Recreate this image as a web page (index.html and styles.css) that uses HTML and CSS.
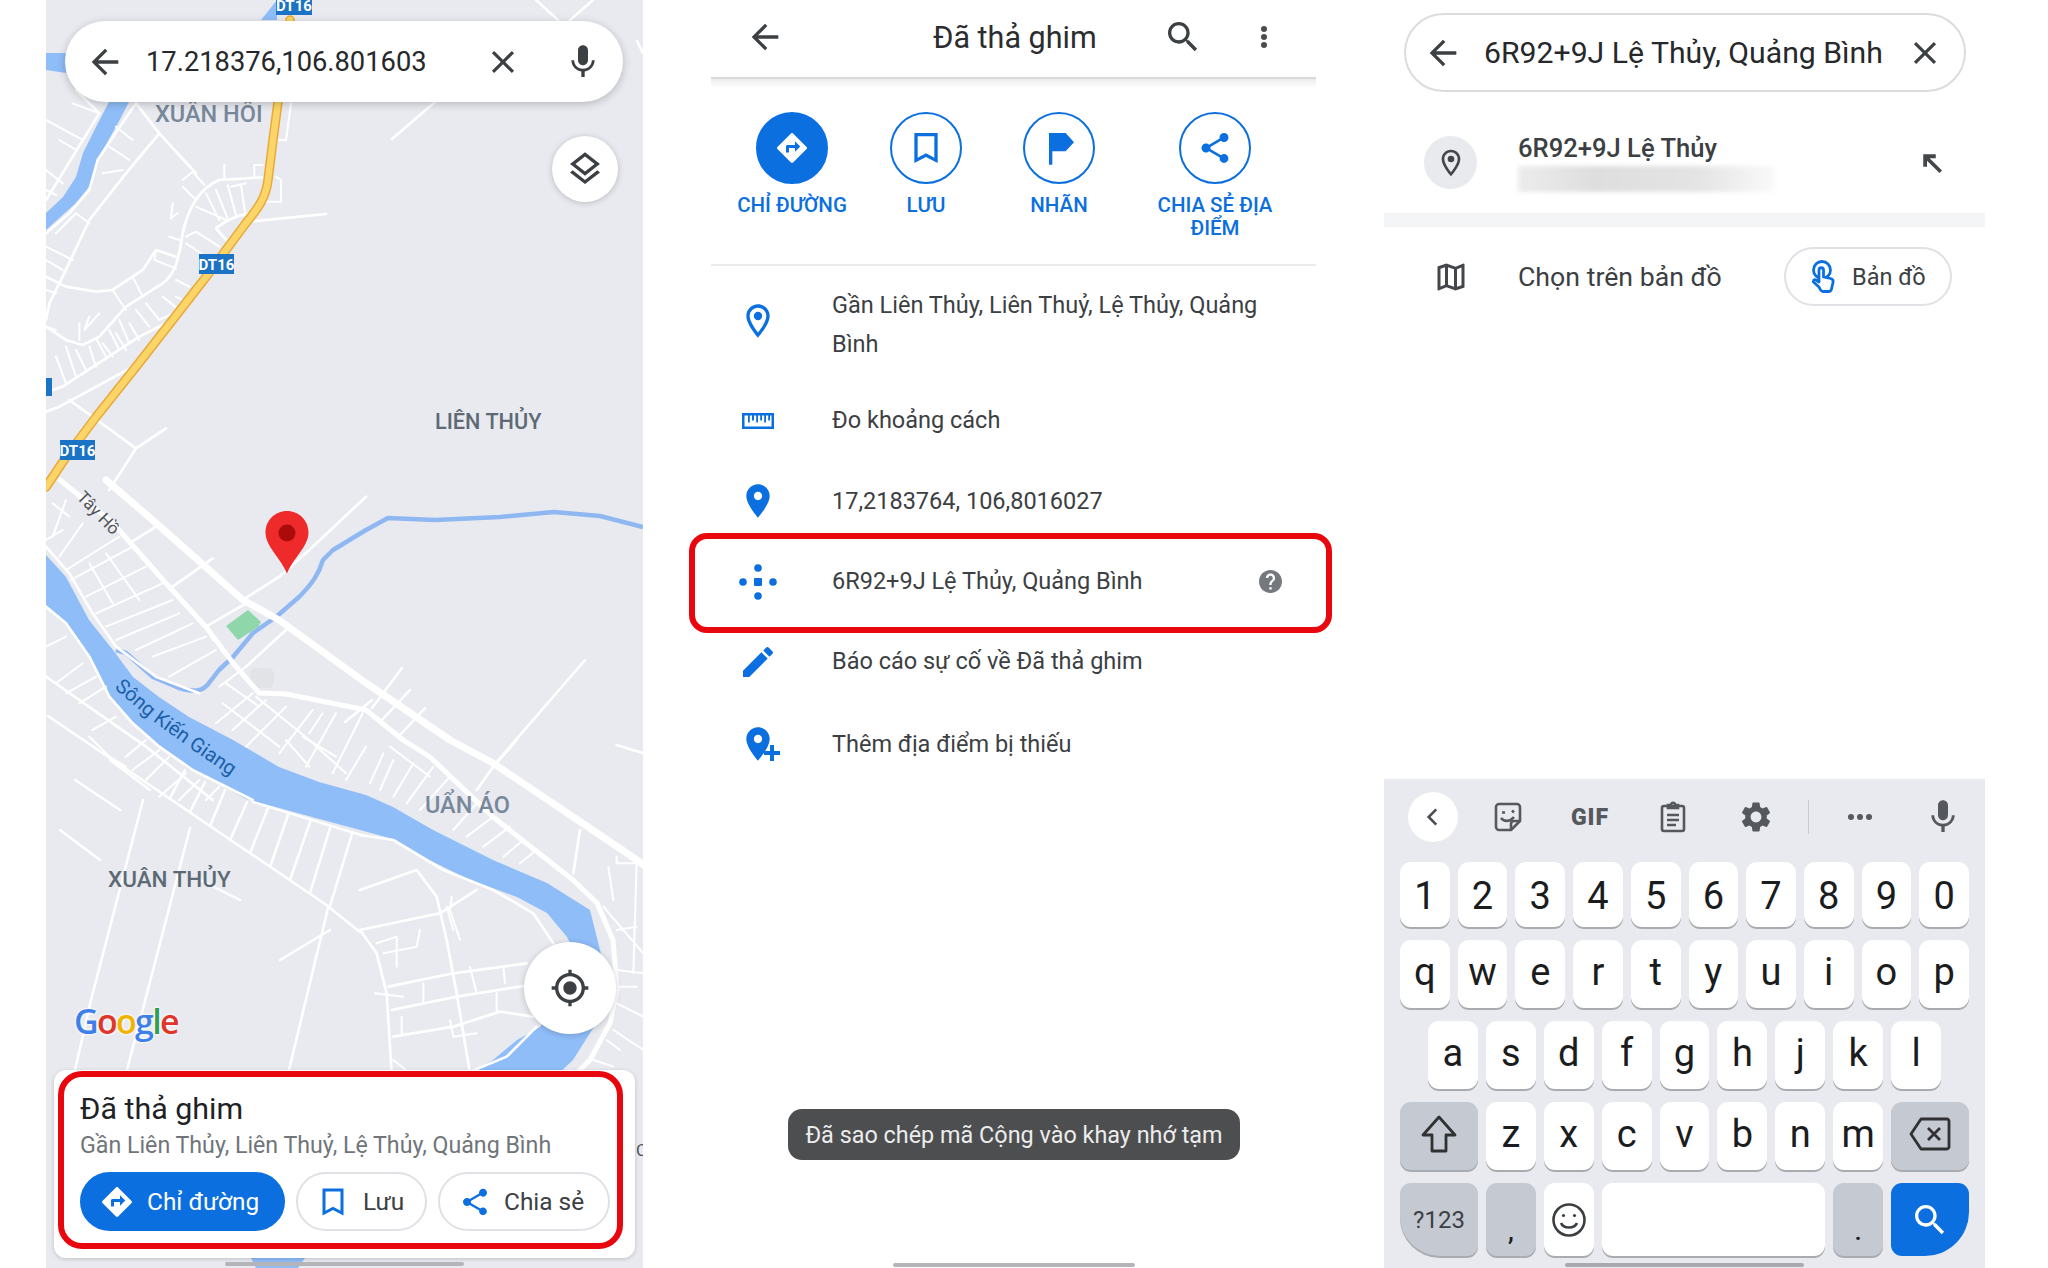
FILE: index.html
```html
<!DOCTYPE html>
<html lang="vi">
<head>
    <meta charset="UTF-8">
    <title>Đã thả ghim</title>
    <link rel="stylesheet" href="styles.css">
</head>
<body>
    <!-- icons -->
    <svg class="sprite" aria-hidden="true">
        <symbol id="i-back" viewBox="0 0 24 24"><path d="M20 11H7.83l5.59-5.59L12 4l-8 8 8 8 1.41-1.41L7.83 13H20v-2z"/></symbol>
        <symbol id="i-close" viewBox="0 0 24 24"><path d="M19 6.41L17.59 5 12 10.59 6.41 5 5 6.41 10.59 12 5 17.59 6.41 19 12 13.41 17.59 19 19 17.59 13.41 12z"/></symbol>
        <symbol id="i-mic" viewBox="0 0 24 24"><path d="M12 14c1.66 0 2.99-1.34 2.99-3L15 5c0-1.66-1.34-3-3-3S9 3.34 9 5v6c0 1.66 1.34 3 3 3zm5.3-3c0 3-2.54 5.1-5.3 5.1S6.7 14 6.7 11H5c0 3.41 2.72 6.23 6 6.72V21h2v-3.28c3.28-.48 6-3.3 6-6.72h-1.7z"/></symbol>
        <symbol id="i-layers" viewBox="0 0 24 24"><path d="M11.99 18.54l-7.37-5.73L3 14.07l9 7 9-7-1.63-1.27-7.38 5.74zM12 16l7.36-5.73L21 9l-9-7-9 7 1.63 1.27L12 16zm0-11.47L17.74 9 12 13.47 6.26 9 12 4.53z"/></symbol>
        <symbol id="i-locate" viewBox="0 0 24 24"><path d="M12 8c-2.21 0-4 1.79-4 4s1.79 4 4 4 4-1.79 4-4-1.79-4-4-4zm8.94 3c-.46-4.17-3.77-7.48-7.94-7.94V1h-2v2.06C6.83 3.52 3.52 6.83 3.06 11H1v2h2.06c.46 4.17 3.77 7.48 7.94 7.94V23h2v-2.06c4.17-.46 7.48-3.77 7.94-7.94H23v-2h-2.06zM12 19c-3.87 0-7-3.13-7-7s3.13-7 7-7 7 3.13 7 7-3.13 7-7 7z"/></symbol>
        <symbol id="i-directions" viewBox="0 0 24 24"><path d="M21.71 11.29l-9-9c-.39-.39-1.02-.39-1.41 0l-9 9c-.39.39-.39 1.02 0 1.41l9 9c.39.39 1.02.39 1.41 0l9-9c.39-.38.39-1.01 0-1.41zM14 14.5V12h-4v3H8v-4c0-.55.45-1 1-1h5V7.5l3.5 3.5-3.5 3.5z"/></symbol>
        <symbol id="i-bookmark" viewBox="0 0 24 24"><path d="M5 3h14v18l-7-3.6L5 21V3zm2 2v12.8l5-2.6 5 2.6V5H7z"/></symbol>
        <symbol id="i-label" viewBox="0 0 24 24"><path d="M6 3h10l5 5.5-5 5.5H8v8H6V3z"/></symbol>
        <symbol id="i-share" viewBox="0 0 24 24"><path d="M18 16.08c-.76 0-1.44.3-1.96.77L8.91 12.7c.05-.23.09-.46.09-.7s-.04-.47-.09-.7l7.05-4.11c.54.5 1.25.81 2.04.81 1.66 0 3-1.34 3-3s-1.34-3-3-3-3 1.34-3 3c0 .24.04.47.09.7L8.04 9.81C7.5 9.31 6.79 9 6 9c-1.66 0-3 1.34-3 3s1.34 3 3 3c.79 0 1.5-.31 2.04-.81l7.12 4.16c-.05.21-.08.43-.08.65 0 1.61 1.31 2.92 2.92 2.92 1.61 0 2.92-1.31 2.92-2.92s-1.31-2.92-2.92-2.92z"/></symbol>
        <symbol id="i-search" viewBox="0 0 24 24"><path d="M15.5 14h-.79l-.28-.27C15.41 12.59 16 11.11 16 9.5 16 5.91 13.09 3 9.5 3S3 5.91 3 9.5 5.91 16 9.5 16c1.61 0 3.09-.59 4.23-1.57l.27.28v.79l5 4.99L20.49 19l-4.99-5zm-6 0C7.01 14 5 11.99 5 9.5S7.01 5 9.5 5 14 7.01 14 9.5 11.99 14 9.5 14z"/></symbol>
        <symbol id="i-more" viewBox="0 0 24 24"><circle cx="12" cy="4" r="3"/><circle cx="12" cy="12" r="3"/><circle cx="12" cy="20" r="3"/></symbol>
        <symbol id="i-pin-outline" viewBox="0 0 24 24"><path d="M12 2C8.13 2 5 5.13 5 9c0 5.25 7 13 7 13s7-7.75 7-13c0-3.87-3.13-7-7-7zM7 9c0-2.76 2.24-5 5-5s5 2.24 5 5c0 2.88-2.88 7.19-5 9.88C9.92 16.21 7 11.85 7 9z"/><circle cx="12" cy="9" r="2.5"/></symbol>
        <symbol id="i-pin" viewBox="0 0 24 24"><path d="M12 2C8.13 2 5 5.13 5 9c0 5.25 7 13 7 13s7-7.75 7-13c0-3.87-3.13-7-7-7zm0 9.5c-1.38 0-2.5-1.12-2.5-2.5s1.12-2.5 2.5-2.5 2.5 1.12 2.5 2.5-1.12 2.5-2.5 2.5z"/></symbol>
        <symbol id="i-ruler" viewBox="0 0 32 16"><path d="M0 0h32v16H0V0zm2.500 2.500v11h27v-11H28v5h-1.800v-5h-2.200v7h-1.800v-7h-2.200v5h-1.800v-5h-2.200v7h-1.800v-7h-2.200v5H10v-5H7.800v7H6v-7H2.500z"/></symbol>
        <symbol id="i-code" viewBox="0 0 38 36"><circle cx="19" cy="4" r="3.800"/><circle cx="19" cy="32" r="3.800"/><circle cx="4" cy="18" r="3.800"/><circle cx="34" cy="18" r="3.800"/><rect x="15" y="14" width="8" height="8" rx="1"/></symbol>
        <symbol id="i-edit" viewBox="3 3 18 18"><path d="M3 17.250V21h3.750L17.810 9.940l-3.750-3.750L3 17.250zM20.710 7.040c.39-.39.39-1.020 0-1.410l-2.340-2.340c-.39-.39-1.020-.39-1.410 0l-1.830 1.830 3.750 3.750 1.830-1.830z"/></symbol>
        <symbol id="i-help" viewBox="2 2 20 20"><path d="M12 2C6.480 2 2 6.480 2 12s4.480 10 10 10 10-4.480 10-10S17.520 2 12 2zm1 17h-2v-2h2v2zm2.070-7.750l-.9.920C13.450 12.900 13 13.500 13 15h-2v-.5c0-1.100.45-2.100 1.170-2.830l1.240-1.260c.37-.36.59-.86.59-1.410 0-1.100-.9-2-2-2s-2 .9-2 2H8c0-2.210 1.790-4 4-4s4 1.790 4 4c0 .88-.36 1.680-.93 2.250z"/></symbol>
        <symbol id="i-northwest" viewBox="0 0 24 24"><path d="M5 15h3V10.100L18 20l2-2-9.900-9.900H15V5H5v10z"/></symbol>
        <symbol id="i-map" viewBox="0 0 24 24"><path d="M20.500 3l-.16.03L15 5.100 9 3 3.360 4.900c-.21.07-.36.25-.36.48V20.500c0 .28.22.5.5.5l.16-.03L9 18.900l6 2.100 5.640-1.900c.21-.07.36-.25.36-.48V3.500c0-.28-.22-.5-.5-.5zM10 5.470l4 1.400v11.660l-4-1.400V5.470zm-5 .99l3-1.010v11.700l-3 1.160V6.460zm14 11.080l-3 1.010V6.860l3-1.160v11.840z"/></symbol>
        <symbol id="i-gear" viewBox="0 0 24 24"><path d="M19.140 12.940c.04-.3.06-.61.06-.94 0-.32-.02-.64-.07-.94l2.030-1.580c.18-.14.23-.41.12-.61l-1.920-3.320c-.12-.22-.37-.29-.59-.22l-2.390.96c-.5-.38-1.030-.7-1.620-.94l-.36-2.540c-.04-.24-.24-.41-.48-.41h-3.840c-.24 0-.43.17-.47.41l-.36 2.540c-.59.24-1.130.57-1.620.94l-2.390-.96c-.22-.08-.47 0-.59.22L2.740 8.870c-.12.21-.08.47.12.61l2.030 1.580c-.05.3-.09.63-.09.94s.02.64.07.94l-2.030 1.580c-.18.14-.23.41-.12.61l1.920 3.320c.12.22.37.29.59.22l2.390-.96c.5.38 1.030.7 1.620.94l.36 2.540c.05.24.24.41.48.41h3.840c.24 0 .44-.17.47-.41l.36-2.540c.59-.24 1.130-.56 1.620-.94l2.390.96c.22.08.47 0 .59-.22l1.920-3.320c.12-.22.07-.47-.12-.61l-2.010-1.580zM12 15.600c-1.980 0-3.600-1.620-3.600-3.600s1.620-3.600 3.600-3.600 3.600 1.620 3.600 3.600-1.620 3.600-3.600 3.600z"/></symbol>
    </svg>

    <div class="page">
        <!-- panel 1: ban do -->
        <section class="map">
            <svg class="map-canvas" viewBox="46 0 597 1268" width="597" height="1268">
                <rect class="land" x="46" y="0" width="597" height="1268"/>

                <!-- song -->
                <path class="water" d="M46 555L66 577 89 620 113 650 133 677 159 697 189 717 233 740 279 767 319 782 366 795 393 807 433 830 493 860 547 883 590 910 600 950 612 1000 590 1033 573 1060 557 1075H467L493 1060 517 1040 540 1027 565 990 570 943 567 937 547 913 517 897 470 880 423 857 393 839 360 830 246 799 219 784 189 769 159 745 133 722 109 695 89 655 66 622 46 605z"/>
                <path class="water" d="M109 102H129L118 123 99 157 89 187 76 203 46 230V213L63 197 76 177 83 153 96 127z"/>
                <path class="water" d="M46 53H66V73L46 70zM261 20L277 0V20z"/>
                <path class="water" d="M251 1258H305L298 1268H256z"/>
                <path class="creek" d="M643 527L600 516 554 512 500 517 435 520 388 518 366 530 333 550 323 560C319 573 313 583 299 597L276 617 253 633 233 657 219 670 209 683C203 692 193 692 179 688L153 677 126 653 116 650"/>
                <path class="park" d="M226 626L248 610 261 622 258 627 238 640z"/>
                <rect class="smudge" x="250" y="668" width="24" height="20" rx="6"/>

                <!-- duong: phia tren, toa do theo anh 3x -->
                <g class="streets" transform="translate(46 90) scale(.3333)">
                    <path class="z-lane" d="M270 40L340 130 450 250M340 130L240 250 130 390 50 560 10 640 0 690"/>
                    <path class="z-lane" d="M650 262L520 270C470 290 430 340 410 430 400 500 390 550 350 580L240 650 160 740 110 765 60 750 0 710"/>
                    <path class="z-lane" d="M0 560L60 590 150 605 200 600 290 540 330 480 390 500"/>
                    <path class="z-lane" d="M610 395L840 372M510 415C540 390 580 375 610 370M510 415L550 460"/>
                    <path class="z-thin" d="M450 350L540 390M480 310L520 390M510 300L545 385M545 285L570 375M585 285L600 385M555 290L600 280"/>
                    <path class="z-thin" d="M420 440L450 425 520 470M420 460L480 500M380 340L375 385 395 370M370 440L400 450"/>
                    <path class="z-thin" d="M410 270L440 245 475 285M410 290L445 325M650 225H625V265M535 225V265M690 260L705 270V335H660M735 40L720 150H690"/>
                    <path class="z-thin" d="M200 600L240 660M260 560L290 620M330 480L325 510 390 535M300 640L340 690 380 670M270 660L310 710M220 690L250 760M190 720L220 780M150 745L180 800"/>
                    <path class="z-thin" d="M390 570L430 590M390 620L430 640M350 620L400 660"/>
                    <path class="z-lane" d="M380 690L280 740 50 890 20 900M280 820L40 950 0 965M70 930L270 1075 360 1015M270 1075L190 1200"/>
                    <path class="z-thin" d="M30 800L60 880M60 770L90 860M90 780L120 840M130 770L150 830M170 760L200 800M210 730L240 780M250 700L280 750M0 710L30 720M100 700V750M130 680L115 720 160 670"/>
                    <path class="z-lane" d="M160 70L80 200 0 330M270 40L215 120 155 210 130 300 70 370 0 430M90 0L160 70"/>
                    <path class="z-thin" d="M0 90L110 150M80 40L160 70M0 240L50 280M0 300L30 315M40 150L90 180M190 170L250 210M210 110L260 150M170 250L230 240M90 370L130 400M30 430L90 370M0 470L80 510M0 510L50 540M0 600L30 610"/>
                </g>

                <!-- duong: quanh song -->
                <g class="streets" transform="translate(46 480) scale(.3333)">
                    <path class="z-lane" d="M590 360L700 290 790 210 960 50M250 190L330 140M380 320L500 235M480 440L600 370M600 560L720 450"/>
                    <path class="z-lane" d="M0 200L70 280 140 400 210 500 330 590 460 640"/>
                    <path class="z-thin" d="M60 270L220 170M75 300L260 200M120 350L300 260M150 400L350 310M180 440L380 360M210 480L400 400M270 510L440 430M320 530L480 470M370 590L510 510M130 250L200 370M180 220L280 360"/>
                    <path class="z-thin" d="M0 180L50 150M20 70L70 110M60 60L20 170M110 130L40 230"/>
                    <path class="z-lane" d="M0 380L60 430 130 530 190 650 260 730 340 800 440 870 620 960"/>
                    <path class="z-lane" d="M0 590L100 660 200 730 300 800 400 880 500 960"/>
                    <path class="z-thin" d="M0 500L60 470M30 610L110 550M60 640L150 590M100 670L180 620M140 750L210 710M130 770L190 830 240 860M240 830L300 780M260 870L340 810M300 900L370 830M340 950L420 880M400 960L460 900M480 960L520 920"/>
                    <path class="z-thin" d="M520 620L600 560M510 730L620 640M560 750L660 660M600 800L720 680M700 820L800 690M780 860L870 700M860 880L950 700M900 900L960 800M630 650L790 780 900 880M530 670L700 800M720 780L790 860M770 770L870 830M540 610L640 680M790 760L830 700"/>
                </g>

                <!-- duong: goc duoi ben phai -->
                <g class="streets" transform="translate(360 740) scale(.3333)">
                    <path class="z-lane" d="M400 80L350 150M470 0L400 80M660 270L640 400M770 15L850 40"/>
                    <path class="z-thin" d="M830 370L820 700M770 350V370H860M745 380L760 480M730 500L850 640M770 570L830 560M770 690L850 700M770 740L830 740M770 790L850 830M760 870L850 930M740 900L780 930M700 960L760 980"/>
                    <path class="z-thin" d="M30 130L70 40M60 150L100 60M100 170L160 70M140 190L220 80M180 210L270 110M280 270L350 190M320 290L400 230M370 320L450 260M430 350L490 300M480 370L530 330M90 20L210 110"/>
                    <path class="z-lane" d="M0 285L100 300 250 390 400 450 520 520 580 610"/>
                    <path class="z-lane" d="M0 450L170 390 230 470 260 600 290 760 330 1000M0 570L240 520 350 450M0 570L50 640 80 760 95 1000"/>
                    <path class="z-thin" d="M50 610L110 590V680M70 640L170 620 180 570M45 760L130 770M190 730V790M125 830V880M270 840L280 890 350 880M330 680L350 760M430 680L435 730M410 760V815M100 960L150 1000M260 500L280 570M275 470L270 510 300 600"/>
                    <path class="z-lane" d="M85 740L280 700 500 670M95 810L290 770 510 735M100 890L280 860 420 815 520 830M320 1000L440 950 530 860"/>
                </g>

                <!-- duong nho con lai -->
                <path class="lane" d="M536 0L558 20M593 0L570 20M637 41L643 53M435 102L392 139"/>
                <path class="lane" d="M143 800L91 1000 75 1070M190 828L127 1070M328 908L289 1070M585 660L495 764M402 668L372 708M253 802L364 836"/>
                <path class="lane" d="M206 627L213 640M48 716L325 904 360 932"/>
                <path class="lane" d="M170 798L185 770M190 812L205 782M210 826L225 790M230 840L247 802M250 853L268 808M270 867L288 815M290 880L310 822M310 893L330 828M330 906L352 834"/>
                <path class="lane" d="M150 790L110 760M120 810L75 780M100 860L60 830M280 960L330 930M240 900L200 880M380 722L410 690M400 735L425 708M345 722L372 700"/>
                <path class="road" d="M106 480L156 523 243 600 279 620 366 683 450 740 493 763 637 860 650 870"/>
                <path class="road-thin" d="M60 480L113 523 163 580 206 627 233 663 259 693 286 694 366 710 403 740 430 757 493 817 573 880 597 903 613 940 617 990 610 1023 590 1060 577 1073"/>
                <path class="road-yellow-edge" d="M290 20L278 102 273 140 268 180C266 197 259 207 246 223L206 277 139 363 96 417 66 457 46 487"/>
                <path class="road-yellow" d="M290 20L278 102 273 140 268 180C266 197 259 207 246 223L206 277 139 363 96 417 66 457 46 487"/>

                <!-- nhan -->
                <rect class="badge" x="199" y="254" width="35" height="20"/>
                <rect class="badge" x="60" y="440" width="35" height="20"/>
                <rect class="badge" x="276" y="-5" width="36" height="20"/>
                <rect class="badge" x="46" y="378" width="6" height="18"/>
                <text class="badge-text" x="216.500" y="270">DT16</text>
                <text class="badge-text" x="77.500" y="456">DT16</text>
                <text class="badge-text" x="294" y="11">DT16</text>

                <text class="place place-light" x="155" y="122">XUÂN HỒI</text>
                <text class="place place-small" x="435" y="429">LIÊN THỦY</text>
                <text class="place place-light" x="425" y="813">UẨN ÁO</text>
                <text class="place" x="108" y="887">XUÂN THỦY</text>
                <text class="street" transform="translate(76 498) rotate(46)">Tây Hồ</text>
                <path id="river-label" fill="none" d="M114 688L150 719 190 748 236 780"/>
                <text class="river-name"><textPath href="#river-label">Sông Kiến Giang</textPath></text>
                <text class="street" x="636" y="1156">C</text>

                <!-- ghim do -->
                <path class="pin-red" d="M287 511c-12 0-21.500 9.500-21.500 21.500 0 14 15 25 21.500 41 6.500-16 21.500-27 21.500-41 0-12-9.500-21.500-21.500-21.500z"/>
                <circle class="pin-dot" cx="287" cy="533" r="8.500"/>
            </svg>

            <div class="map-search">
                <svg class="icon icon-40"><use href="#i-back"/></svg>
                <span class="map-search-text">17.218376,106.801603</span>
                <svg class="icon icon-38"><use href="#i-close"/></svg>
                <svg class="icon icon-40 map-search-mic"><use href="#i-mic"/></svg>
            </div>

            <button class="fab fab-layers"><svg class="icon icon-40"><use href="#i-layers"/></svg></button>
            <button class="fab fab-locate"><svg class="icon icon-40"><use href="#i-locate"/></svg></button>

            <div class="google-logo"><span class="g-blue">G</span><span class="g-red">o</span><span class="g-yellow">o</span><span class="g-blue">g</span><span class="g-green">l</span><span class="g-red">e</span></div>

            <div class="place-card">
                <h2 class="place-title">Đã thả ghim</h2>
                <p class="place-sub">Gần Liên Thủy, Liên Thuỷ, Lệ Thủy, Quảng Bình</p>
                <div class="card-buttons">
                    <button class="pill pill-primary"><svg class="icon icon-36"><use href="#i-directions"/></svg>Chỉ đường</button>
                    <button class="pill pill-save"><svg class="icon icon-36 blue"><use href="#i-bookmark"/></svg>Lưu</button>
                    <button class="pill pill-share"><svg class="icon icon-32 blue"><use href="#i-share"/></svg>Chia sẻ</button>
                </div>
                <div class="red-box"></div>
            </div>
            <div class="home-bar home-bar-map"></div>
        </section>

        <!-- panel 2: chi tiet -->
        <section class="detail">
            <header class="detail-head">
                <svg class="icon icon-40 head-back"><use href="#i-back"/></svg>
                <h1 class="detail-title">Đã thả ghim</h1>
                <svg class="icon icon-40 head-search"><use href="#i-search"/></svg>
                <svg class="icon icon-dots"><use href="#i-more"/></svg>
            </header>

            <div class="actions">
                <div class="action">
                    <span class="action-circle is-filled"><svg class="icon icon-36"><use href="#i-directions"/></svg></span>
                    <span class="action-label">CHỈ ĐƯỜNG</span>
                </div>
                <div class="action">
                    <span class="action-circle"><svg class="icon icon-40 blue"><use href="#i-bookmark"/></svg></span>
                    <span class="action-label">LƯU</span>
                </div>
                <div class="action">
                    <span class="action-circle"><svg class="icon icon-40 blue"><use href="#i-label"/></svg></span>
                    <span class="action-label">NHÃN</span>
                </div>
                <div class="action">
                    <span class="action-circle"><svg class="icon icon-36 blue"><use href="#i-share"/></svg></span>
                    <span class="action-label">CHIA SẺ ĐỊA ĐIỂM</span>
                </div>
            </div>

            <ul class="info-list">
                <li class="info-row is-tall">
                    <svg class="icon icon-40 blue"><use href="#i-pin-outline"/></svg>
                    <span class="info-text">Gần Liên Thủy, Liên Thuỷ, Lệ Thủy, Quảng Bình</span>
                </li>
                <li class="info-row">
                    <svg class="icon blue icon-ruler"><use href="#i-ruler"/></svg>
                    <span class="info-text">Đo khoảng cách</span>
                </li>
                <li class="info-row">
                    <svg class="icon icon-40 blue"><use href="#i-pin"/></svg>
                    <span class="info-text">17,2183764, 106,8016027</span>
                </li>
                <li class="info-row is-marked">
                    <svg class="icon blue icon-code"><use href="#i-code"/></svg>
                    <span class="info-text">6R92+9J Lệ Thủy, Quảng Bình</span>
                    <svg class="icon icon-help"><use href="#i-help"/></svg>
                </li>
                <li class="info-row">
                    <svg class="icon blue icon-edit"><use href="#i-edit"/></svg>
                    <span class="info-text">Báo cáo sự cố về Đã thả ghim</span>
                </li>
                <li class="info-row is-last">
                    <span class="pin-plus">
                        <svg class="icon icon-40 blue"><use href="#i-pin"/></svg>
                        <span class="plus-v"></span><span class="plus-h"></span>
                    </span>
                    <span class="info-text">Thêm địa điểm bị thiếu</span>
                </li>
            </ul>

            <div class="toast">Đã sao chép mã Cộng vào khay nhớ tạm</div>
            <div class="home-bar home-bar-detail"></div>
        </section>

        <!-- panel 3: tim kiem + ban phim -->
        <section class="finder">
            <div class="finder-search">
                <svg class="icon icon-40"><use href="#i-back"/></svg>
                <span class="finder-text">6R92+9J Lệ Thủy, Quảng Bình</span>
                <svg class="icon icon-38"><use href="#i-close"/></svg>
            </div>

            <div class="suggestion">
                <span class="suggestion-circle"><svg class="icon icon-32 dark"><use href="#i-pin-outline"/></svg></span>
                <div class="suggestion-body">
                    <div class="suggestion-title">6R92+9J Lệ Thủy</div>
                    <div class="suggestion-blur"></div>
                </div>
                <svg class="icon icon-30 dark"><use href="#i-northwest"/></svg>
            </div>
            <div class="band"></div>

            <div class="pick-row">
                <svg class="icon icon-36 dark"><use href="#i-map"/></svg>
                <span class="pick-text">Chọn trên bản đồ</span>
                <button class="pick-button">
                    <svg class="icon-hand" viewBox="0 0 26 33" fill="none">
                        <circle cx="11" cy="10" r="8.500" stroke="#0b6fe0" stroke-width="2.800"/>
                        <path d="M8 27L3 22.500c-1.500-1.500 0-3.500 2-2.500l3 2V10c0-3 4.500-3 4.500 0v7l7 1.500c2 .5 3 2 2.500 4l-1.500 6.500c-.3 1.500-1.500 2.500-3 2.500H12c-1.500 0-2.500-1-4-4.500z" fill="#fff" stroke="#0b6fe0" stroke-width="2.800" stroke-linejoin="round"/>
                    </svg>
                    Bản đồ
                </button>
            </div>

            <div class="keyboard">
                <div class="kb-tools">
                    <span class="kb-back"><svg viewBox="0 0 24 24" width="26" height="26" fill="none" stroke="#4a4d52" stroke-width="2.400"><path d="M15 5l-7 7 7 7"/></svg></span>
                    <span class="kb-tool">
                        <svg viewBox="0 0 28 30" width="28" height="30" fill="none" stroke="#55585c" stroke-width="2.600" stroke-linejoin="round"><path d="M5 2h18c1.500 0 3 1.500 3 3v14l-9 9H5c-1.500 0-3-1.500-3-3V5c0-1.500 1.500-3 3-3z"/><path d="M26 19h-6c-2 0-3 1-3 3v6"/><path d="M7 16c3 4 9 4 13-1"/><path d="M8 10.500h3M18 8.500l2 2"/></svg>
                    </span>
                    <span class="kb-tool kb-gif">GIF</span>
                    <span class="kb-tool">
                        <svg viewBox="0 0 26 32" width="26" height="32" fill="none" stroke="#55585c" stroke-width="2.600"><rect x="2" y="5" width="22" height="25" rx="2"/><path d="M8 7V4h3c0-3 4-3 4 0h3v3H8zM7 14h12M7 19h12M7 24h9"/></svg>
                    </span>
                    <span class="kb-tool"><svg class="icon icon-36 gear"><use href="#i-gear"/></svg></span>
                    <span class="kb-sep"></span>
                    <span class="kb-tool kb-dots"><i></i><i></i><i></i></span>
                    <span class="kb-tool"><svg class="icon icon-40 gear"><use href="#i-mic"/></svg></span>
                </div>

                <div class="kb-rows">
                    <div class="kb-row kb-ten kb-num">
                        <span class="key">1</span><span class="key">2</span><span class="key">3</span><span class="key">4</span><span class="key">5</span><span class="key">6</span><span class="key">7</span><span class="key">8</span><span class="key">9</span><span class="key">0</span>
                    </div>
                    <div class="kb-row kb-ten kb-tall">
                        <span class="key">q</span><span class="key">w</span><span class="key">e</span><span class="key">r</span><span class="key">t</span><span class="key">y</span><span class="key">u</span><span class="key">i</span><span class="key">o</span><span class="key">p</span>
                    </div>
                    <div class="kb-row kb-nine kb-tall">
                        <span class="key">a</span><span class="key">s</span><span class="key">d</span><span class="key">f</span><span class="key">g</span><span class="key">h</span><span class="key">j</span><span class="key">k</span><span class="key">l</span>
                    </div>
                    <div class="kb-row kb-shift kb-tall">
                        <span class="key key-gray">
                            <svg viewBox="0 0 38 40" width="38" height="40" fill="none" stroke="#2f3133" stroke-width="2.800" stroke-linejoin="round"><path d="M19 3L3 21h9v16h14V21h9z"/></svg>
                        </span>
                        <span class="key">z</span><span class="key">x</span><span class="key">c</span><span class="key">v</span><span class="key">b</span><span class="key">n</span><span class="key">m</span>
                        <span class="key key-gray">
                            <svg viewBox="0 0 42 36" width="42" height="36" fill="none" stroke="#2f3133" stroke-width="2.800" stroke-linejoin="round"><path d="M12 3H38c1 0 2 1 2 2v26c0 1-1 2-2 2H12L2 18z"/><path d="M19 12l12 12M31 12L19 24"/></svg>
                        </span>
                    </div>
                    <div class="kb-row kb-bottom">
                        <span class="key key-gray key-sym">?123</span>
                        <span class="key key-gray key-low">,</span>
                        <span class="key">
                            <svg viewBox="0 0 36 36" width="36" height="36" fill="none" stroke="#3c3f42" stroke-width="2.600"><circle cx="18" cy="18" r="15.500"/><path d="M10 21c2.500 6 13.500 6 16 0"/><circle cx="12.500" cy="13.500" r="1.600" fill="#3c3f42" stroke="none"/><circle cx="23.500" cy="13.500" r="1.600" fill="#3c3f42" stroke="none"/></svg>
                        </span>
                        <span class="key"></span>
                        <span class="key key-gray key-low">.</span>
                        <span class="key key-enter"><svg class="icon icon-40 white"><use href="#i-search"/></svg></span>
                    </div>
                </div>
                <div class="home-bar home-bar-kb"></div>
            </div>
        </section>
    </div>
</body>
</html>
```

FILE: styles.css
```css
* {
    box-sizing: border-box;
}
html, body {
    margin: 0;
    padding: 0;
    background: #fff;
}
body {
    width: 2048px;
    height: 1268px;
    overflow: hidden;
    font-family: Roboto, "Noto Sans", sans-serif;
    color: #202124;
}
h1, h2, p, ul {
    margin: 0;
    padding: 0;
    font-weight: 400;
}
ul {
    list-style: none;
}
button {
    font-family: inherit;
    border: none;
    padding: 0;
    background: none;
}
.sprite {
    position: absolute;
    width: 0;
    height: 0;
}
.icon {
    display: block;
    flex: none;
    fill: #3c4043;
}
.icon-40 { width: 40px; height: 40px; }
.icon-38 { width: 38px; height: 38px; }
.icon-36 { width: 36px; height: 36px; }
.icon-32 { width: 32px; height: 32px; }
.icon-30 { width: 30px; height: 30px; }
.blue { fill: #0b6fe0; }
.dark { fill: #43474b; }
.white { fill: #fff; }
.gear { fill: #55585c; }

.page {
    display: flex;
    gap: 68px;
    height: 1268px;
    padding-left: 46px;
}

/* ---- ban do ---- */
.map {
    position: relative;
    width: 597px;
    height: 1268px;
    overflow: hidden;
    flex: none;
}
.map-canvas {
    position: absolute;
    left: 0;
    top: 0;
}
.land { fill: #e8eaf0; }
.water { fill: #8fbdf8; }
.creek {
    fill: none;
    stroke: #8fb8f2;
    stroke-width: 4.500;
    stroke-linejoin: round;
}
.road, .road-thin, .lane, .road-yellow, .road-yellow-edge {
    fill: none;
    stroke: #fff;
    stroke-linejoin: round;
    stroke-linecap: round;
}
.road { stroke-width: 7; }
.road-thin { stroke-width: 5; }
.lane { stroke-width: 2.500; }
.road-yellow-edge { stroke: #e8a93c; stroke-width: 9.500; }
.road-yellow { stroke: #fbd567; stroke-width: 6.500; }
.streets path {
    fill: none;
    stroke: #fff;
    stroke-linejoin: round;
    stroke-linecap: round;
}
.streets .z-lane { stroke-width: 8; }
.streets .z-thin { stroke-width: 6; }
.park { fill: #8fd6ab; }
.smudge { fill: #e2e3e7; }
.badge { fill: #1a73c4; }
.badge-text {
    fill: #fff;
    font-size: 15px;
    font-weight: 700;
    text-anchor: middle;
}
.place {
    fill: #5d6a75;
    font-size: 22.500px;
    font-weight: 500;
}
.place-small { font-size: 21.700px; }
.place-light { fill: #78889a; font-size: 23.500px; }
.street {
    fill: #4f5357;
    font-size: 17px;
}
.river-name {
    fill: #1a5fa8;
    font-size: 20px;
}
.pin-red { fill: #ee2a2a; }
.pin-dot { fill: #ab0b0b; }

.map-search {
    position: absolute;
    left: 19px;
    top: 21px;
    width: 558px;
    height: 81px;
    display: flex;
    align-items: center;
    padding: 0 20px;
    background: #fff;
    border-radius: 41px;
    box-shadow: 0 2px 8px rgba(0, 0, 0, 0.22);
}
.map-search-text {
    flex: 1;
    margin-left: 21px;
    font-size: 27.300px;
    color: #26282b;
}
.map-search-mic {
    margin-left: 41px;
}
.fab {
    position: absolute;
    display: flex;
    align-items: center;
    justify-content: center;
    background: #fff;
    border-radius: 50%;
    box-shadow: 0 1px 6px rgba(0, 0, 0, 0.2);
}
.fab-layers {
    left: 506px;
    top: 136px;
    width: 66px;
    height: 66px;
}
.fab-locate {
    left: 478px;
    top: 942px;
    width: 92px;
    height: 92px;
}
.google-logo {
    position: absolute;
    left: 28px;
    top: 998px;
    font-family: "Open Sans", Roboto, sans-serif;
    font-size: 34px;
    font-weight: 600;
    letter-spacing: -1.700px;
    text-shadow: 0 0 3px #fff, 0 0 3px #fff;
}
.g-blue { color: #3f7fe8; }
.g-red { color: #e0352b; }
.g-yellow { color: #f0b400; }
.g-green { color: #2f9e4f; }

.place-card {
    position: absolute;
    left: 8px;
    top: 1070px;
    width: 581px;
    height: 188px;
    padding: 21px 0 0 26px;
    background: #fff;
    border-radius: 12px;
    box-shadow: 0 1px 4px rgba(0, 0, 0, 0.18);
}
.place-title {
    font-size: 30.400px;
    line-height: 36px;
    color: #202124;
}
.place-sub {
    margin-top: 3px;
    font-size: 23.200px;
    line-height: 30px;
    color: #70757a;
}
.card-buttons {
    display: flex;
    gap: 11px;
    margin-top: 12px;
}
.pill {
    display: flex;
    align-items: center;
    height: 59px;
    font-size: 24.400px;
    color: #3c4043;
    border: 2px solid #dfe1e5;
    border-radius: 30px;
    background: #fff;
}
.pill-primary {
    width: 205px;
    padding-left: 17px;
    gap: 12px;
    color: #fff;
    background: #0b6fe0;
    border-color: #0b6fe0;
}
.pill-primary .icon { fill: #fff; }
.pill-save {
    width: 131px;
    padding-left: 17px;
    gap: 12px;
}
.pill-share {
    width: 172px;
    padding-left: 19px;
    gap: 13px;
}
.red-box {
    position: absolute;
    left: 4px;
    top: 1px;
    width: 565px;
    height: 178px;
    border: 6px solid #e8070f;
    border-radius: 24px;
}
.home-bar {
    position: absolute;
    height: 4px;
    background: #b3b5b8;
    border-radius: 2px;
}
.home-bar-map {
    left: 179px;
    top: 1262px;
    width: 239px;
}

/* ---- chi tiet ---- */
.detail {
    position: relative;
    width: 605px;
    height: 1268px;
    flex: none;
}
.detail-head {
    position: relative;
    display: flex;
    align-items: center;
    height: 79px;
    padding: 0 0 3px 34px;
    border-bottom: 2px solid #d9d9d9;
}
.detail-head::after {
    content: "";
    position: absolute;
    left: 0;
    right: 0;
    top: 79px;
    height: 9px;
    background: linear-gradient(#ececec, #fff);
}
.detail-title {
    margin-left: 148px;
    font-size: 30.500px;
    color: #2b2d30;
}
.head-search {
    margin-left: 66px;
}
.head-back, .head-search {
    fill: #3c4043;
}
.icon-dots {
    width: 24px;
    height: 30px;
    margin-left: 49px;
    fill: #4a4d50;
}
.actions {
    display: grid;
    grid-template-columns: 120px 148px 118px 194px;
    padding: 33px 0 26px 21px;
    border-bottom: 2px solid #ebebeb;
    height: 187px;
}
.action {
    display: flex;
    flex-direction: column;
    align-items: center;
}
.action-circle {
    display: flex;
    align-items: center;
    justify-content: center;
    width: 72px;
    height: 72px;
    border: 2px solid #0b6fe0;
    border-radius: 50%;
}
.action-circle.is-filled {
    background: #0b6fe0;
}
.action-circle.is-filled .icon {
    fill: #fff;
}
.action-label {
    margin-top: 10px;
    max-width: 130px;
    font-size: 20.500px;
    font-weight: 500;
    line-height: 23px;
    text-align: center;
    color: #0b6fe0;
}
.info-list {
    display: flex;
    flex-direction: column;
    gap: 41px;
    padding: 20px 34px 0 27px;
}
.info-row {
    position: relative;
    display: flex;
    align-items: center;
    gap: 54px;
    min-height: 39px;
    font-size: 23.500px;
    line-height: 39px;
    color: #3c4043;
}
.info-text {
    flex: 1;
}
.is-tall {
    margin-bottom: -4px;
}
.is-tall > .icon {
    margin-top: -8px;
}
.is-last {
    margin-top: 2px;
}
.icon-ruler {
    width: 32px;
    height: 16px;
    margin: 0 4px;
}
.icon-code {
    width: 38px;
    height: 36px;
    margin: 0 1px;
}
.icon-edit {
    width: 30px;
    height: 30px;
    margin: 0 5px;
}
.icon-help {
    width: 23px;
    height: 23px;
    fill: #75797e;
}
.is-marked::after {
    content: "";
    position: absolute;
    left: -49px;
    right: -50px;
    top: -29px;
    bottom: -32px;
    border: 6px solid #e8070f;
    border-radius: 18px;
}
.pin-plus {
    position: relative;
    display: block;
    width: 40px;
    height: 40px;
    flex: none;
}
.plus-v, .plus-h {
    position: absolute;
    background: #0b6fe0;
}
.plus-v {
    left: 32px;
    top: 21px;
    width: 4px;
    height: 16px;
}
.plus-h {
    left: 26px;
    top: 27px;
    width: 16px;
    height: 4px;
}
.toast {
    position: absolute;
    left: 77px;
    top: 1109px;
    width: 452px;
    height: 51px;
    display: flex;
    align-items: center;
    justify-content: center;
    background: #4d4e50;
    border-radius: 14px;
    font-size: 23.400px;
    color: #ececec;
}
.home-bar-detail {
    left: 182px;
    top: 1263px;
    width: 242px;
}

/* ---- tim kiem ---- */
.finder {
    position: relative;
    display: flex;
    flex-direction: column;
    width: 601px;
    height: 1268px;
    flex: none;
}
.finder-search {
    display: flex;
    align-items: center;
    height: 79px;
    margin: 13px 19px 0 20px;
    padding: 0 20px 0 17px;
    border: 2px solid #dcdcdc;
    border-radius: 40px;
}
.finder-text {
    flex: 1;
    margin-left: 21px;
    font-size: 30.200px;
    color: #26282b;
    white-space: nowrap;
}
.suggestion {
    display: flex;
    align-items: center;
    height: 53px;
    margin-top: 44px;
    padding: 0 38px 0 40px;
}
.suggestion-circle {
    display: flex;
    align-items: center;
    justify-content: center;
    width: 53px;
    height: 53px;
    border-radius: 50%;
    background: #e8eaed;
}
.suggestion-body {
    flex: 1;
    margin-left: 41px;
}
.suggestion-title {
    font-size: 25.600px;
    font-weight: 500;
    line-height: 30px;
    color: #3c4043;
}
.suggestion-blur {
    width: 257px;
    height: 26px;
    margin-top: 3px;
    background: linear-gradient(90deg, #ececec 0%, #dedede 30%, #e4e4e4 70%, #fafafa 100%);
    filter: blur(2px);
}
.band {
    height: 14px;
    margin-top: 24px;
    background: #f4f5f7;
}
.pick-row {
    display: flex;
    align-items: center;
    height: 59px;
    margin-top: 20px;
    padding: 0 33px 0 49px;
}
.pick-text {
    flex: 1;
    margin-left: 49px;
    font-size: 26.700px;
    color: #3c4043;
}
.pick-button {
    display: flex;
    align-items: center;
    gap: 15px;
    width: 168px;
    height: 59px;
    padding-left: 25px;
    border: 2px solid #dfe1e5;
    border-radius: 30px;
    background: #fff;
    font-size: 23.500px;
    color: #3c4043;
}
.icon-hand {
    width: 26px;
    height: 33px;
}

/* ---- ban phim ---- */
.keyboard {
    position: absolute;
    left: 0;
    right: 0;
    top: 779px;
    bottom: 0;
    background: #e8eaf0;
}
.kb-tools {
    display: grid;
    grid-template-columns: 50px 100px 64px 102px 64px 40px 64px 102px;
    align-items: center;
    height: 50px;
    margin: 13px 0 20px;
    padding-left: 24px;
}
.kb-back {
    display: flex;
    align-items: center;
    justify-content: center;
    width: 50px;
    height: 50px;
    border-radius: 50%;
    background: #fff;
}
.kb-tool {
    display: flex;
    align-items: center;
    justify-content: center;
}
.kb-gif {
    font-size: 23px;
    font-weight: 900;
    letter-spacing: 1px;
    color: #55585c;
}
.kb-sep {
    justify-self: center;
    width: 1px;
    height: 34px;
    background: #c8cace;
}
.kb-dots {
    gap: 3px;
}
.kb-dots i {
    width: 6px;
    height: 6px;
    border-radius: 50%;
    background: #55585c;
}
.kb-rows {
    display: flex;
    flex-direction: column;
    gap: 13px;
    padding: 0 16px;
}
.kb-row {
    display: grid;
    gap: 8px;
    height: 68px;
}
.kb-num { height: 65px; }
.kb-num .key { padding-top: 2px; }
.kb-tall .key { padding-bottom: 5px; }
.kb-ten { grid-template-columns: repeat(10, 1fr); }
.kb-nine {
    grid-template-columns: repeat(9, 1fr);
    padding: 0 28px;
}
.kb-shift { grid-template-columns: 78px repeat(7, 1fr) 78px; }
.kb-bottom {
    grid-template-columns: 78px 50px 50px 1fr 50px 78px;
    height: 73px;
}
.key {
    display: flex;
    align-items: center;
    justify-content: center;
    background: #fff;
    border-radius: 11px;
    box-shadow: 0 2px 0 #a9abb0;
    font-size: 38px;
    color: #1b1c1e;
}
.key-gray {
    background: #c5c9d1;
}
.key-sym {
    font-size: 24px;
    color: #3c4043;
    border-bottom-left-radius: 40px;
}
.key-low {
    align-items: flex-end;
    padding-bottom: 10px;
    font-size: 26px;
    font-weight: 500;
}
.key-enter {
    background: #0b6fe0;
    box-shadow: none;
    border-bottom-right-radius: 44px;
}
.home-bar-kb {
    left: 181px;
    top: 484px;
    width: 239px;
    background: #a8aaae;
}
```
